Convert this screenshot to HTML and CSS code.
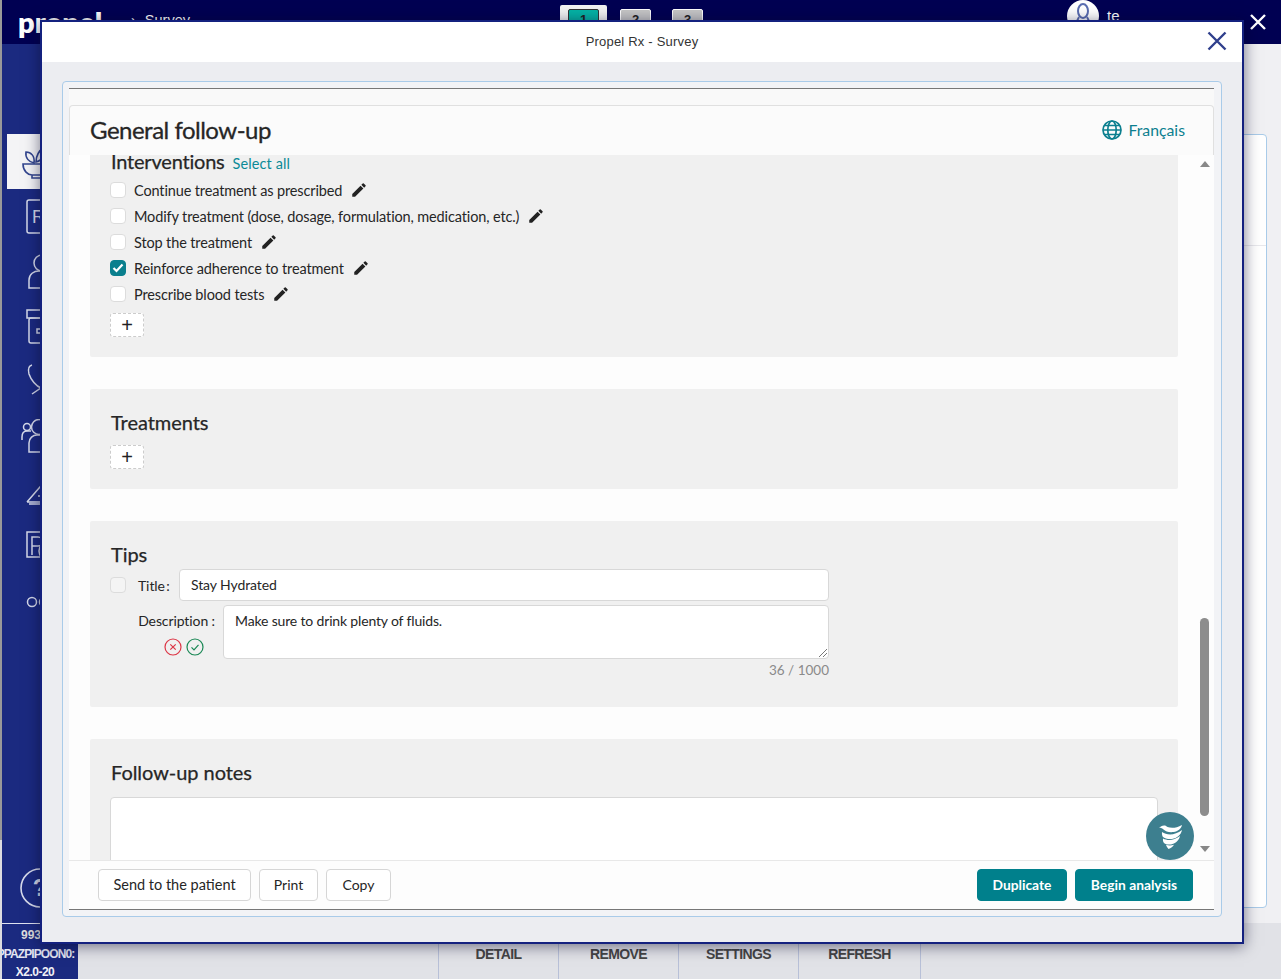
FILE: index.html
```html
<!DOCTYPE html>
<html lang="en">
<head>
<meta charset="utf-8">
<title>Propel Rx - Survey</title>
<link rel="stylesheet" href="styles.css">
</head>
<body>
<div class="app">
  <header class="topbar">
    <div class="logo">propel<span class="logo-rx">Rx</span></div>
    <div class="crumb"><span class="crumb-sep">›</span>Survey</div>
    <div class="steps">
      <div class="step-active"><span class="step step-on">1</span></div>
      <span class="step">2</span>
      <span class="step">3</span>
    </div>
    <div class="user">
      <div class="avatar"><svg width="20" height="26" viewBox="0 0 20 26" fill="none" stroke="#5a6db0" stroke-width="2"><ellipse cx="10" cy="9" rx="5" ry="7"/><path d="M6 15c-2 3-3 5-3 9M14 15c2 3 3 5 3 9"/></svg></div>
      <span class="user-name">te</span>
    </div>
    <svg class="app-close" width="16" height="16" viewBox="0 0 16 16" stroke="#fff" stroke-width="2.4"><path d="M1 1l14 14M15 1L1 15"/></svg>
  </header>

  <nav class="sidebar">
    <div class="side-active">
      <svg width="40" height="40" viewBox="0 0 40 40" fill="none" stroke="#33468f" stroke-width="1.6"><path d="M2 22h26c0 7-5 11-8 11h-9c-4 0-9-4-9-11zM11 33v3h9v-3"/><path d="M13 21C8 20 4 16 5 10c5 0 9 4 8 11zM15 20c0-6 3-12 8-14 2 6-1 12-8 14z"/></svg>
    </div>
    <div class="side-item"><svg width="40" height="36" viewBox="0 0 40 36" fill="none" stroke="#d6daea" stroke-width="1.5"><rect x="1" y="1" width="30" height="33" rx="2"/><text x="6" y="24" class="rx-mark">R</text></svg></div>
    <div class="side-item"><svg width="40" height="36" viewBox="0 0 40 36" fill="none" stroke="#d6daea" stroke-width="1.5"><circle cx="16" cy="9" r="8"/><path d="M3 34V26c0-6 5-9 10-9h8c5 0 9 3 9 9v8z"/></svg></div>
    <div class="side-item"><svg width="40" height="36" viewBox="0 0 40 36" fill="none" stroke="#d6daea" stroke-width="1.5"><rect x="1" y="1" width="28" height="8"/><rect x="3" y="9" width="24" height="25" rx="2"/><path d="M11 20h4v-4h4v4h4v4h-4v4h-4v-4h-4z"/></svg></div>
    <div class="side-item"><svg width="40" height="36" viewBox="0 0 40 36" fill="none" stroke="#d6daea" stroke-width="1.5"><path d="M6 1C2 2 2 6 3 10c2 6 7 12 12 14 5-2 10-8 12-14M15 24v5M6 30l9-6 9 6"/></svg></div>
    <div class="side-item side-people"><svg width="40" height="36" viewBox="0 0 40 36" fill="none" stroke="#d6daea" stroke-width="1.5"><circle cx="6" cy="8" r="3.5"/><path d="M1 21v-3c0-4 2-6 5-6h4"/><circle cx="18" cy="8" r="7.5"/><path d="M8 33V24c0-5 4-8 8-8h6c5 0 8 3 8 8v9z"/></svg></div>
    <div class="side-item"><svg width="40" height="28" viewBox="0 0 40 28" fill="none" stroke="#d6daea" stroke-width="1.5"><path d="M1 24L20 2v22M1 24h22M3 26h24"/><path d="M14 14h6M12 18h8"/></svg></div>
    <div class="side-item"><svg width="40" height="32" viewBox="0 0 40 32" fill="none" stroke="#d6daea" stroke-width="1.5"><path d="M1 1h18v25H1zM6 24V6h6a4 4 0 0 1 0 9H6"/><circle cx="22" cy="20" r="9"/></svg></div>
    <div class="side-item"><svg width="40" height="14" viewBox="0 0 40 14" fill="none" stroke="#d6daea" stroke-width="1.5"><circle cx="6" cy="7" r="4.5"/><circle cx="18" cy="7" r="4.5"/></svg></div>
    <div class="side-help"><svg width="40" height="40" viewBox="0 0 40 40" fill="none"><circle cx="20" cy="20" r="19" stroke="#d6daea" stroke-width="1.6"/><text x="20" y="28" class="help-mark">?</text></svg></div>
    <div class="side-foot">
      <div class="foot-num">993</div>
      <div class="foot-code">PPAZPIPOON0:</div>
      <div class="foot-ver">X2.0-20</div>
    </div>
  </nav>

  <main class="backdrop">
    <div class="back-card"><div class="back-card-rule"></div></div>
  </main>

  <footer class="bottombar">
    <span class="tab">DETAIL</span>
    <span class="tab">REMOVE</span>
    <span class="tab">SETTINGS</span>
    <span class="tab">REFRESH</span>
  </footer>
</div>

<section class="modal">
  <div class="modal-head">
    <span class="modal-title">Propel Rx - Survey</span>
    <svg class="modal-close" width="20" height="20" viewBox="0 0 20 20" stroke="#2f3f8c" stroke-width="2.4"><path d="M1.500 1.500l17 17M18.500 1.500l-17 17"/></svg>
  </div>
  <div class="modal-body">
    <div class="frame">
      <div class="inner">
        <div class="card-head">
          <h1 class="page-title">General follow-up</h1>
          <div class="lang">
            <svg width="20" height="20" viewBox="0 0 20 20" fill="none" stroke="#0b7f8f" stroke-width="1.700"><circle cx="10" cy="10" r="9"/><ellipse cx="10" cy="10" rx="4.200" ry="9"/><path d="M1 10h18M2.200 5.500h15.600M2.200 14.500h15.600"/></svg>
            <span>Français</span>
          </div>
        </div>
        <div class="scroll">
          <div class="content">
            <div class="panel panel-first">
              <div class="panel-head">
                <h2 class="panel-title">Interventions</h2>
                <a class="select-all">Select all</a>
              </div>
              <ul class="checks">
                <li class="check-row"><span class="box"></span><span>Continue treatment as prescribed</span><svg class="pen" viewBox="0 0 24 24"><path d="M3 17.250V21h3.750L17.810 9.940l-3.750-3.750L3 17.250zM20.710 7.040a1 1 0 0 0 0-1.410l-2.340-2.340a1 1 0 0 0-1.410 0l-1.830 1.830 3.750 3.750 1.830-1.830z"/></svg></li>
                <li class="check-row"><span class="box"></span><span>Modify treatment (dose, dosage, formulation, medication, etc.)</span><svg class="pen" viewBox="0 0 24 24"><path d="M3 17.250V21h3.750L17.810 9.940l-3.750-3.750L3 17.250zM20.710 7.040a1 1 0 0 0 0-1.410l-2.340-2.340a1 1 0 0 0-1.410 0l-1.830 1.830 3.750 3.750 1.830-1.830z"/></svg></li>
                <li class="check-row"><span class="box"></span><span>Stop the treatment</span><svg class="pen" viewBox="0 0 24 24"><path d="M3 17.250V21h3.750L17.810 9.940l-3.750-3.750L3 17.250zM20.710 7.040a1 1 0 0 0 0-1.410l-2.340-2.340a1 1 0 0 0-1.410 0l-1.830 1.830 3.750 3.750 1.830-1.830z"/></svg></li>
                <li class="check-row"><span class="box box-on"><svg width="12" height="10" viewBox="0 0 12 10" fill="none" stroke="#fff" stroke-width="2.200"><path d="M1.500 5l3 3 6-6.500"/></svg></span><span>Reinforce adherence to treatment</span><svg class="pen" viewBox="0 0 24 24"><path d="M3 17.250V21h3.750L17.810 9.940l-3.750-3.750L3 17.250zM20.710 7.040a1 1 0 0 0 0-1.410l-2.340-2.340a1 1 0 0 0-1.410 0l-1.830 1.830 3.750 3.750 1.830-1.830z"/></svg></li>
                <li class="check-row"><span class="box"></span><span>Prescribe blood tests</span><svg class="pen" viewBox="0 0 24 24"><path d="M3 17.250V21h3.750L17.810 9.940l-3.750-3.750L3 17.250zM20.710 7.040a1 1 0 0 0 0-1.410l-2.340-2.340a1 1 0 0 0-1.410 0l-1.830 1.830 3.750 3.750 1.830-1.830z"/></svg></li>
              </ul>
              <button class="add add-first">+</button>
            </div>

            <div class="panel panel-treat">
              <h2 class="panel-title">Treatments</h2>
              <button class="add add-treat">+</button>
            </div>

            <div class="panel panel-tips">
              <h2 class="panel-title">Tips</h2>
              <div class="tip-title">
                <span class="box"></span>
                <label class="tip-label tip-label-short">Title :</label>
                <div class="field field-title">Stay Hydrated</div>
              </div>
              <div class="tip-desc">
                <div class="tip-side">
                  <label class="tip-label">Description :</label>
                  <div class="tip-actions">
                    <svg width="18" height="18" viewBox="0 0 18 18" fill="none" stroke="#dc3545" stroke-width="1.200"><circle cx="9" cy="9" r="8"/><path d="M6.300 6.300l5.400 5.400M11.700 6.300l-5.400 5.400"/></svg>
                    <svg width="18" height="18" viewBox="0 0 18 18" fill="none" stroke="#198754" stroke-width="1.200"><circle cx="9" cy="9" r="8"/><path d="M5.500 9.300l2.500 2.500 4.500-5"/></svg>
                  </div>
                </div>
                <div class="field field-desc">Make sure to drink plenty of fluids.<svg class="grip" width="8" height="8" viewBox="0 0 8 8" stroke="#777" stroke-width="1"><path d="M8 0L0 8M8 4L4 8"/></svg></div>
              </div>
              <div class="counter">36 / 1000</div>
            </div>

            <div class="panel panel-notes">
              <h2 class="panel-title">Follow-up notes</h2>
              <div class="notes-box"></div>
            </div>
          </div>
          <div class="scrollbar">
            <span class="arrow-up"></span>
            <span class="thumb"></span>
            <span class="arrow-down"></span>
          </div>
        </div>
        <div class="card-foot">
          <button class="btn btn-send">Send to the patient</button>
          <button class="btn btn-print">Print</button>
          <button class="btn btn-copy">Copy</button>
          <button class="btn btn-teal btn-dup">Duplicate</button>
          <button class="btn btn-teal btn-begin">Begin analysis</button>
        </div>
      </div>
    </div>
  </div>
  <div class="fab">
    <svg width="23" height="25" viewBox="0 0 23 25" fill="#fff"><path d="M0 3.500C2 3 3 1 6 1.500c1 .2 1.500 1 2.500 1.500 4 1.500 9 1 14.500-2-1 4-4 6.500-8.500 7C10 8.500 6.500 7.500 4.500 5.500 3.500 4.300 2 3.800 0 3.500z"/><path d="M3 8c5 3.500 13 3.500 20-2-1 5-5 8-10 9-4 .3-7.500-.5-9-2-1-1.200-1.200-3.500-1-5z"/><path d="M4 14.500c5 2.500 11 2 17-2.500-1 5-5 7.500-9 8.500-3 .3-5.500-.3-7-1.500-1-1-1.200-3-1-4.500z"/><path d="M7 20.800c2.500 1 5 1 8 0-1 2-3 3.200-5.500 4.200C8.500 23.800 7.300 22.300 7 20.800z"/></svg>
  </div>
</section>
</body>
</html>
```
FILE: styles.css
```css
* { box-sizing: border-box; }
html, body { margin: 0; padding: 0; }
body {
  width: 1281px;
  height: 979px;
  overflow: hidden;
  position: relative;
  font-family: "Lato", "Noto Sans", sans-serif;
  color: #262626;
  background: #e1e2e7;
}
.app {
  display: grid;
  grid-template-columns: 78px 1fr;
  grid-template-rows: 44px 879px 56px;
  height: 979px;
  background: linear-gradient(#999 0 840px, #dcdce0 840px);
}
.topbar {
  grid-column: 1 / 3;
  background: #000052;
  margin-left: 2px;
  position: relative;
  display: flex;
  color: #fff;
}
.logo {
  font: 800 29px/1 "Lato", sans-serif;
  margin: 7px 0 0 16px;
  width: 112px;
  white-space: nowrap;
}
.logo-rx { font-size: 10px; margin-left: 3px; }
.crumb {
  font: 14.500px/1 "Liberation Sans", sans-serif;
  margin: 13px 0 0 1px;
  width: 429px;
}
.crumb-sep { margin-right: 9px; }
.steps {
  display: flex;
  align-items: flex-start;
  gap: 13px;
  margin-top: 5px;
  width: 143px;
}
.step-active {
  background: #f2f2f2;
  width: 47px;
  height: 30px;
  padding: 4px 8px;
  border-radius: 2px 2px 0 0;
  flex: none;
}
.step {
  display: block;
  flex: none;
  width: 31px;
  height: 26px;
  margin-top: 4px;
  background: #c6c6c6;
  border: 1px solid #fff;
  border-radius: 2px 2px 0 0;
  text-align: center;
  font: bold 13px/20px "Liberation Sans", sans-serif;
  color: #222;
}
.step + .step { margin-left: 8px; }
.step-on {
  margin-top: 0;
  background: #05b3a5;
  border: 1px solid #333;
}
.user {
  display: flex;
  align-items: flex-start;
  gap: 8px;
  margin-left: 364px;
}
.avatar {
  width: 32px;
  height: 32px;
  border-radius: 50%;
  background: #fff;
  display: flex;
  justify-content: center;
  padding-top: 2px;
  overflow: hidden;
}
.user-name {
  font: 15px/1 "Liberation Sans", sans-serif;
  margin-top: 8px;
}
.app-close { position: absolute; right: 15px; top: 14px; }

.sidebar {
  grid-row: 2 / 4;
  margin-left: 2px;
  background: #1b2a80;
  display: flex;
  flex-direction: column;
  padding-top: 90px;
  color: #e8e8f0;
}
.side-active {
  margin-left: 5px;
  height: 55px;
  flex: none;
  background: #f4f4f6;
  padding: 8px 0 0 14px;
}
.side-item {
  height: 55px;
  flex: none;
  padding-left: 24px;
  display: flex;
  align-items: center;
}
.side-people { padding-left: 19px; }
.rx-mark {
  font: 18px "Liberation Sans", sans-serif;
  fill: #d6daea;
  stroke: none;
}
.side-help {
  margin-top: 239px;
  padding-left: 18px;
  height: 40px;
  flex: none;
}
.help-mark {
  font: bold 24px "Liberation Sans", sans-serif;
  fill: #d6daea;
  text-anchor: middle;
}
.side-foot {
  margin-top: 15px;
  flex: none;
  border-top: 1px solid #dfe2f0;
  font: 12px/18.500px "Liberation Sans", sans-serif;
  text-align: center;
  overflow: hidden;
  padding-top: 2px;
}
.foot-num { font-weight: bold; color: #ddd; text-align: left; padding-left: 19px; }
.foot-code { letter-spacing: -.9px; white-space: nowrap; margin-left: -9px; font-weight: bold; color: #e4e6f2; }
.foot-ver { font-weight: bold; letter-spacing: -.5px; color: #f0f0f6; margin-right: 10px; }

.backdrop {
  background: #f0f0f3;
  display: flex;
  justify-content: flex-end;
  padding: 90px 14px 15px 0;
}
.back-card {
  width: 900px;
  background: #fff;
  border: 1px solid #a9cbe9;
  border-radius: 4px;
}
.back-card-rule { margin-top: 110px; border-top: 1px solid #e8e8ec; }
.bottombar {
  grid-column: 2;
  background: #e1e2e7;
  display: flex;
  padding-left: 360px;
}
.tab {
  width: 120px;
  border-left: 1px solid #b8c0d8;
  text-align: center;
  font: bold 14px/22px "Liberation Sans", sans-serif;
  letter-spacing: -.6px;
  padding-top: 20px;
  color: #454545;
}
.tab:last-child { width: 123px; border-right: 1px solid #b8c0d8; }

.modal {
  position: absolute;
  left: 40px;
  top: 20px;
  width: 1204px;
  height: 924px;
  border: 2px solid #14217f;
  background: #ecedf1;
  box-shadow: 0 2px 14px rgba(10, 10, 40, .55);
  display: flex;
  flex-direction: column;
}
.modal-head {
  height: 40px;
  background: #fff;
  flex: none;
  display: flex;
  align-items: center;
  justify-content: center;
  position: relative;
}
.modal-title {
  font: 13px/1 "Liberation Sans", sans-serif;
  letter-spacing: .2px;
  color: #333;
  margin: -1px 0 0 0;
}
.modal-close { position: absolute; right: 15px; top: 9px; }
.modal-body {
  flex: 1;
  padding: 19px 20px 25px 20px;
  min-height: 0;
}
.frame {
  height: 100%;
  border: 1px solid #a9cbe9;
  border-radius: 4px;
  padding: 6px 7px 6px 6px;
  background: #f2f3f6;
}
.inner {
  height: 100%;
  border-top: 1px solid #777;
  border-bottom: 1px solid #777;
  background: #f9f9f9;
  padding-top: 16px;
  display: flex;
  flex-direction: column;
}
.card-head {
  height: 50px;
  flex: none;
  background: #fbfbfb;
  border: 1px solid #e0e0e0;
  border-bottom: 0;
  border-radius: 4px 4px 0 0;
  display: flex;
  align-items: center;
  justify-content: space-between;
  padding: 0 28px 2px 20px;
}
.page-title {
  margin: 0;
  font-size: 24px;
  font-weight: 400;
  letter-spacing: -.5px;
  -webkit-text-stroke: .3px #262626;
}
.lang {
  display: flex;
  align-items: center;
  gap: 6px;
  color: #0b7f8f;
  font-size: 15.800px;
}
.scroll {
  height: 705px;
  flex: none;
  background: #fdfdfd;
  display: flex;
  overflow: hidden;
  padding-left: 21px;
  position: relative;
}
.content {
  width: 1088px;
  flex: none;
  margin-top: -27px;
  display: flex;
  flex-direction: column;
  gap: 32px;
}
.panel {
  background: #f0f0f0;
  padding: 20px 20px 0;
  flex: none;
  border-radius: 2px;
}
.panel-first { height: 229px; }
.panel-treat { height: 100px; }
.panel-tips { height: 186px; }
.panel-notes { height: 200px; }
.panel-head {
  display: flex;
  align-items: baseline;
  gap: 8px;
}
.panel-title {
  margin: 0 0 1px 1px;
  font-size: 20px;
  line-height: 26px;
  font-weight: 400;
  letter-spacing: -.05px;
  -webkit-text-stroke: .25px #262626;
}
.panel-head .panel-title { letter-spacing: -.2px; }
.select-all { color: #0b8a97; font-size: 14.500px; letter-spacing: .1px; }
.checks {
  list-style: none;
  margin: 2px 0 0;
  padding: 0;
}
.check-row {
  height: 26px;
  display: flex;
  align-items: center;
  font-size: 14.500px;
  letter-spacing: -.13px;
}
.box {
  width: 16px;
  height: 16px;
  flex: none;
  background: #fff;
  border: 1px solid #dcdcdc;
  border-radius: 4px;
  margin-right: 8px;
  display: flex;
  align-items: center;
  justify-content: center;
}
.box-on { background: #0a7f8d; border-color: #0a7f8d; }
.pen {
  width: 18px;
  height: 18px;
  margin-left: 8px;
  fill: #222;
  flex: none;
}
.add {
  display: block;
  width: 34px;
  height: 24px;
  padding: 0;
  background: #fff;
  border: 1px dashed #ccc;
  border-radius: 3px;
  font: 20px/20px "Liberation Sans", sans-serif;
  color: #222;
}
.add-first { margin-top: 6px; }
.add-treat { margin-top: 10px; }
.tip-title {
  display: flex;
  align-items: center;
  height: 32px;
  margin-top: 2px;
}
.tip-title .box { margin-right: 12px; background: #f4f4f4; }
.tip-label { font-size: 14px; letter-spacing: -.1px; white-space: nowrap; }
.tip-label-short { width: 33px; word-spacing: -2px; }
.field {
  background: #fff;
  border: 1px solid #d8d8d8;
  border-radius: 4px;
  font-size: 14px;
  letter-spacing: -.1px;
  padding: 0 11px;
}
.field-title {
  width: 650px;
  height: 32px;
  line-height: 30px;
  margin-left: 8px;
}
.tip-desc {
  display: flex;
  margin-top: 4px;
}
.tip-side {
  width: 113px;
  padding: 7px 8px 0 20px;
  display: flex;
  flex-direction: column;
  align-items: flex-end;
}
.tip-actions {
  display: flex;
  gap: 4px;
  margin: 9px 11px 0 0;
}
.field-desc {
  width: 606px;
  height: 54px;
  line-height: 30px;
  letter-spacing: -.16px;
  position: relative;
}
.grip { position: absolute; right: 1px; bottom: 1px; }
.counter {
  width: 719px;
  text-align: right;
  font-size: 13.500px;
  color: #8a8a8a;
  margin-top: 3px;
}
.notes-box {
  margin-top: 12px;
  height: 140px;
  background: #fff;
  border: 1px solid #d8d8d8;
  border-radius: 4px;
}
.scrollbar {
  width: 15px;
  margin-left: 19px;
  flex: none;
  display: flex;
  flex-direction: column;
  align-items: center;
}
.arrow-up {
  margin-top: 6px;
  border: 5px solid transparent;
  border-top: 0;
  border-bottom: 6px solid #888;
}
.thumb {
  width: 9px;
  height: 198px;
  margin-top: 451px;
  background: #8d8d8d;
  border-radius: 5px;
}
.arrow-down {
  margin-top: 30px;
  border: 5px solid transparent;
  border-bottom: 0;
  border-top: 6px solid #888;
}
.card-foot {
  flex: 1;
  background: #fdfdfd;
  border-top: 1px solid #e8e8e8;
  display: flex;
  align-items: center;
  gap: 8px;
  padding: 0 21px 0 29px;
}
.btn {
  height: 32px;
  padding: 0 0 2px;
  flex: none;
  background: #fff;
  border: 1px solid #d6d6d6;
  border-radius: 4px;
  font: 14.500px "Lato", sans-serif;
  color: #262626;
}
.btn-send { width: 153px; }
.btn-print { width: 59px; font-size: 14px; }
.btn-copy { width: 65px; font-size: 14px; }
.btn-teal {
  background: #00808c;
  border-color: #00808c;
  color: #fff;
  font-size: 13.800px;
  font-weight: 700;
}
.btn-dup { width: 90px; margin-left: auto; }
.btn-begin { width: 118px; }
.fab {
  position: absolute;
  left: 1104px;
  top: 790px;
  width: 48px;
  height: 48px;
  border-radius: 50%;
  background: #3d7f8f;
  display: flex;
  align-items: center;
  justify-content: center;
}
```
